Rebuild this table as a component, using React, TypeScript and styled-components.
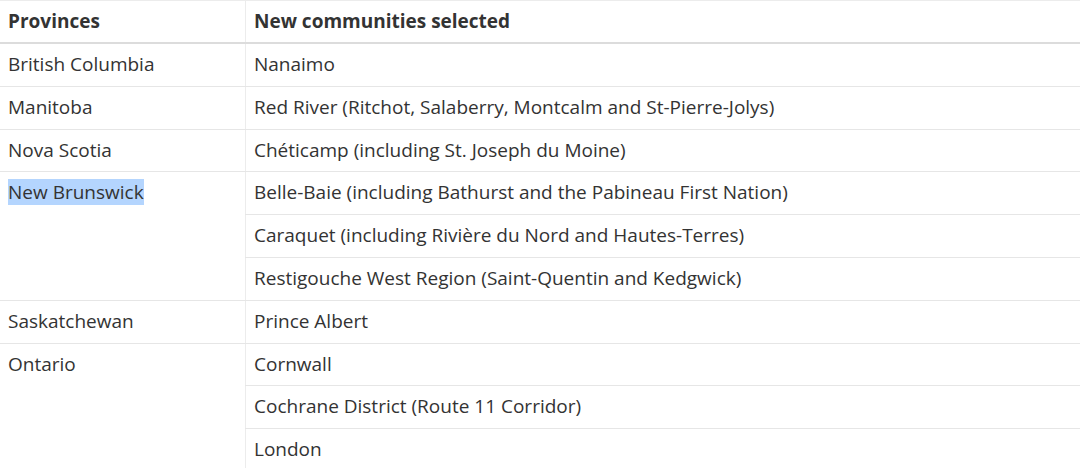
import React from "react";
import styled, { createGlobalStyle } from "styled-components";

const Global = createGlobalStyle`
  html, body { margin: 0; padding: 0; background: #fff; }
  body { font-family: "Open Sans", "Noto Sans", sans-serif; color: #333; }
`;

const Table = styled.table`
  width: 1080px;
  border-collapse: collapse;
  font-size: 19px;
  line-height: 25.8px;
`;

const HeadCell = styled.th<{ $first?: boolean }>`
  text-align: left;
  font-weight: 700;
  padding: 8px 8px 7.2px 8px;
  border-top: 1px solid #ececec;
  border-bottom: 2px solid #dcdcdc;
  border-left: ${(p) => (p.$first ? "none" : "1px solid #ececec")};
  width: ${(p) => (p.$first ? "229px" : "auto")};
  color: #333;
`;

const Cell = styled.td<{ $first?: boolean }>`
  text-align: left;
  vertical-align: top;
  padding: 8px;
  border-bottom: 1px solid #e6e6e6;
  border-left: ${(p) => (p.$first ? "none" : "1px solid #ececec")};
`;

const Selected = styled.span`
  background: #b4d5fe;
`;

type Group = { province: string; selected?: boolean; items: string[] };

const data: Group[] = [
  { province: "British Columbia", items: ["Nanaimo"] },
  { province: "Manitoba", items: ["Red River (Ritchot, Salaberry, Montcalm and St-Pierre-Jolys)"] },
  { province: "Nova Scotia", items: ["Chéticamp (including St. Joseph du Moine)"] },
  {
    province: "New Brunswick",
    selected: true,
    items: [
      "Belle-Baie (including Bathurst and the Pabineau First Nation)",
      "Caraquet (including Rivière du Nord and Hautes-Terres)",
      "Restigouche West Region (Saint-Quentin and Kedgwick)",
    ],
  },
  { province: "Saskatchewan", items: ["Prince Albert"] },
  {
    province: "Ontario",
    items: ["Cornwall", "Cochrane District (Route 11 Corridor)", "London"],
  },
];

export default function App() {
  return (
    <>
      <Global />
      <Table>
        <thead>
          <tr>
            <HeadCell $first>Provinces</HeadCell>
            <HeadCell>New communities selected</HeadCell>
          </tr>
        </thead>
        <tbody>
          {data.map((g) =>
            g.items.map((item, i) => (
              <tr key={g.province + i}>
                {i === 0 && (
                  <Cell $first rowSpan={g.items.length}>
                    {g.selected ? <Selected>{g.province}</Selected> : g.province}
                  </Cell>
                )}
                <Cell>{item}</Cell>
              </tr>
            ))
          )}
        </tbody>
      </Table>
    </>
  );
}
